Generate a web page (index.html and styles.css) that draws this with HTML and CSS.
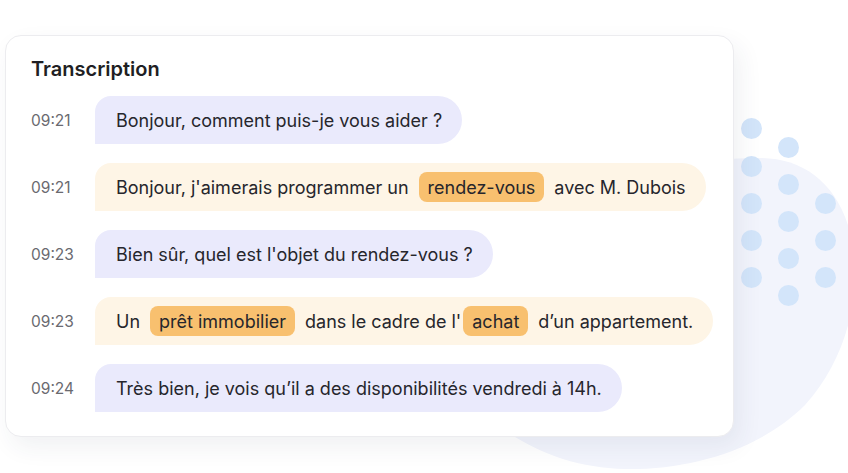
FILE: index.html
```html
<!DOCTYPE html>
<html lang="fr">
<head>
<meta charset="utf-8">
<title>Transcription</title>
<link rel="stylesheet" href="styles.css">
</head>
<body>
<div class="scene">
  <svg class="blob" width="848" height="473" viewBox="0 0 848 473" aria-hidden="true">
    <path d="M600 200 C 640 170, 700 158, 760 158 C 805 158, 840 185, 852 240 C 862 300, 845 360, 805 405 C 760 450, 690 470, 625 469 C 580 468, 545 455, 515 437 L 560 300 Z" fill="#f2f4fc"/>
  </svg>
  <div class="dots" aria-hidden="true">
    <span class="dot" style="left:741px;top:118px"></span>
    <span class="dot" style="left:741px;top:156px"></span>
    <span class="dot" style="left:741px;top:193px"></span>
    <span class="dot" style="left:741px;top:230px"></span>
    <span class="dot" style="left:741px;top:267px"></span>
    <span class="dot" style="left:778px;top:137px"></span>
    <span class="dot" style="left:778px;top:174px"></span>
    <span class="dot" style="left:778px;top:211px"></span>
    <span class="dot" style="left:778px;top:248px"></span>
    <span class="dot" style="left:778px;top:285px"></span>
    <span class="dot" style="left:815px;top:193px"></span>
    <span class="dot" style="left:815px;top:230px"></span>
    <span class="dot" style="left:815px;top:267px"></span>
  </div>

  <section class="card">
    <h2 class="title">Transcription</h2>
    <div class="rows">
      <div class="row">
        <span class="time">09:21</span>
        <div class="bubble agent"><span>Bonjour, comment puis-je vous aider ?</span></div>
      </div>
      <div class="row">
        <span class="time">09:21</span>
        <div class="bubble client"><span>Bonjour, j'aimerais programmer un</span><span class="chip">rendez-vous</span><span>avec M. Dubois</span></div>
      </div>
      <div class="row">
        <span class="time">09:23</span>
        <div class="bubble agent"><span>Bien sûr, quel est l'objet du rendez-vous ?</span></div>
      </div>
      <div class="row">
        <span class="time">09:23</span>
        <div class="bubble client"><span>Un</span><span class="chip">prêt immobilier</span><span>dans le cadre de l'</span><span class="chip attached">achat</span><span>d’un appartement.</span></div>
      </div>
      <div class="row">
        <span class="time">09:24</span>
        <div class="bubble agent"><span>Très bien, je vois qu’il a des disponibilités vendredi à 14h.</span></div>
      </div>
    </div>
  </section>
</div>
</body>
</html>
```

FILE: styles.css
```css
* { box-sizing: border-box; }

html, body {
  margin: 0;
  padding: 0;
  background: #ffffff;
}

body {
  font-family: Inter, "Noto Sans", "Liberation Sans", sans-serif;
  color: #26262c;
  width: 848px;
  height: 473px;
  overflow: hidden;
}

.scene {
  position: relative;
  width: 848px;
  height: 473px;
  padding: 35px 0 0 5px;
}

.blob {
  position: absolute;
  left: 0;
  top: 0;
  z-index: 0;
}

.dots {
  position: absolute;
  inset: 0;
  z-index: 1;
}

.dot {
  position: absolute;
  width: 21px;
  height: 21px;
  border-radius: 50%;
  background: #d3e5fa;
}

.card {
  position: relative;
  z-index: 2;
  width: 729px;
  height: 402px;
  background: #ffffff;
  border: 1px solid #ececef;
  border-radius: 16px;
  box-shadow: 6px 10px 24px rgba(40, 50, 90, 0.07);
  padding: 21px 25px 0 25px;
}

.title {
  margin: 0;
  font-size: 20px;
  line-height: 24px;
  font-weight: 600;
  color: #1f1f24;
}

.rows {
  margin-top: 15px;
  display: flex;
  flex-direction: column;
  gap: 19px;
}

.row {
  display: flex;
  align-items: center;
}

.time {
  width: 64px;
  flex: none;
  font-size: 15.5px;
  color: #6a6a70;
  font-weight: 400;
}

.bubble {
  display: flex;
  align-items: center;
  gap: 10px;
  height: 48px;
  padding: 0 20px 0 21px;
  border-radius: 16px 24px 24px 0;
  font-size: 18px;
  white-space: nowrap;
}

.agent { background: #eaeafc; }
.client { background: #fef5e6; }

.chip {
  display: inline-flex;
  align-items: center;
  height: 30px;
  padding: 0 9px;
  border-radius: 8px;
  background: #f8c06f;
}

.chip.attached { margin-left: -8px; }
```
